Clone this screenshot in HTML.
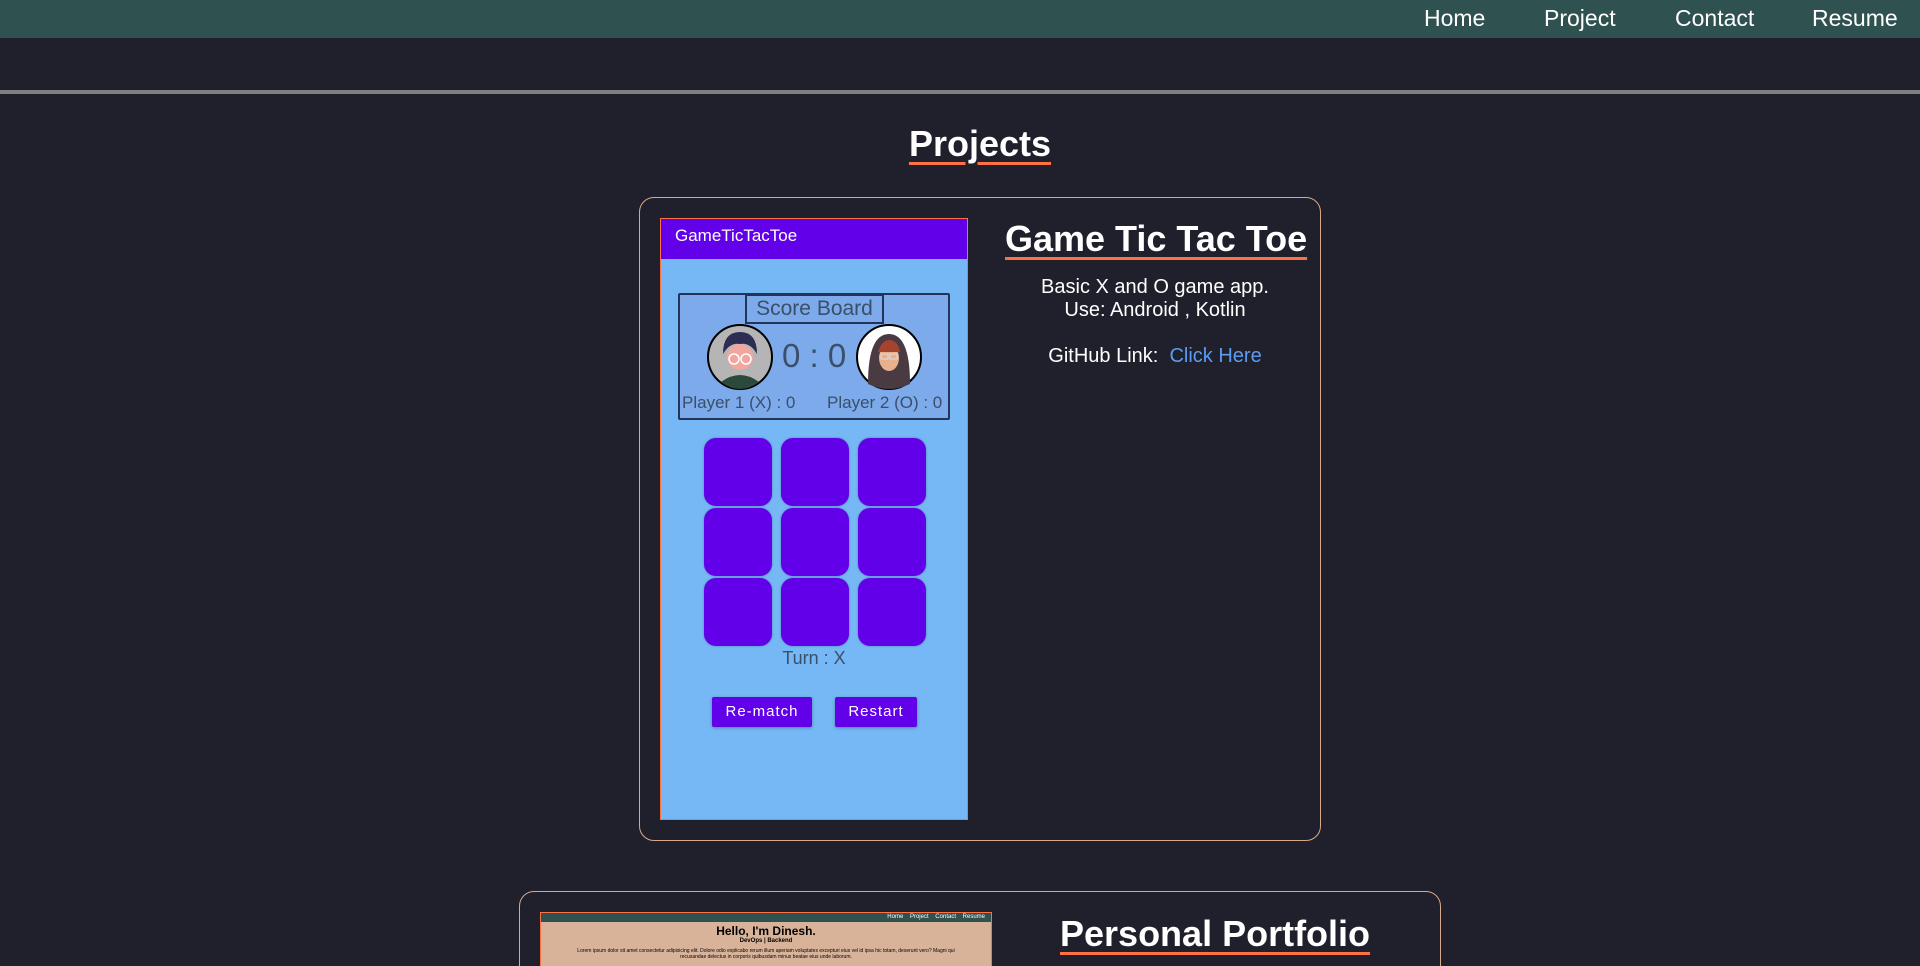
<!DOCTYPE html>
<html style="overflow:hidden;height:966px"><head><meta charset="utf-8"><style>
*{margin:0;padding:0;box-sizing:border-box}
body{width:1920px;height:966px;overflow:hidden;background:#1f202b;font-family:"Liberation Sans",sans-serif;position:relative;color:#fff}
.abs{position:absolute}
nav{position:absolute;left:0;top:0;width:1920px;height:38px;background:#2f5150}
nav span{position:absolute;top:5px;font-size:23px;color:#fff}
.hr{left:0;top:90px;width:1920px;height:4px;background:#7f7f7f}
.card{border:1px solid #d8aa8c;border-radius:15px}
.uline{text-decoration:underline;text-decoration-color:#ff7043;text-decoration-thickness:3px;text-underline-offset:6px}
.cell{position:absolute;width:68px;height:68px;background:#6200ea;border-radius:12px;box-shadow:0 0 2px rgba(0,0,0,.3)}
.btn{position:absolute;height:30px;background:#6200ea;border-radius:2px;color:#fff;font-size:15px;text-align:center;line-height:30px;letter-spacing:1px;box-shadow:0 1px 3px rgba(0,0,0,.3)}
.gray{color:#3a4f6a}
</style></head><body>
<nav><span style="left:1424px">Home</span><span style="left:1544px">Project</span><span style="left:1675px">Contact</span><span style="left:1812px">Resume</span></nav>
<div class="abs hr"></div>
<div class="abs uline" style="left:0;width:1960px;text-align:center;top:123px;font-size:36px;font-weight:bold">Projects</div>

<div class="abs card" style="left:639px;top:197px;width:682px;height:644px"></div>
<div class="abs" style="left:660px;top:218px;width:308px;height:602px;background:#75b8f5;border:1px solid #ff7043">
  <div class="abs" style="left:0;top:0;width:306px;height:40px;background:#6200ea;color:#fff;font-size:17px;padding:7px 0 0 14px">GameTicTacToe</div>
  <div class="abs" style="left:17px;top:74px;width:272px;height:127px;border:2px solid #22345a;background:#7caaea;border-radius:2px"></div>
  <div class="abs gray" style="left:84px;top:75px;width:139px;height:30px;border:2px solid #22345a;font-size:21px;text-align:center;line-height:26px">Score Board</div>
  <svg class="abs" style="left:44px;top:103px" width="70" height="70" viewBox="0 0 70 70"><circle cx="35" cy="35" r="32" fill="#b5b5b5" stroke="#000" stroke-width="2"/><path d="M16 60 Q35 46 54 60 Q45 67 35 67 Q25 67 16 60Z" fill="#2c4a3c"/><circle cx="35" cy="35" r="13" fill="#f2a6a0"/><path d="M18 32 Q18 10 35 10 Q52 10 52 32 Q45 20 35 22 Q25 20 18 32Z" fill="#2d2c52"/><circle cx="29" cy="37" r="5" fill="none" stroke="#fff" stroke-width="1.5"/><circle cx="41" cy="37" r="5" fill="none" stroke="#fff" stroke-width="1.5"/></svg>
  <div class="abs gray" style="left:121px;top:118px;font-size:33px">0 : 0</div>
  <svg class="abs" style="left:193px;top:103px" width="70" height="70" viewBox="0 0 70 70"><circle cx="35" cy="35" r="32" fill="#fff" stroke="#000" stroke-width="2"/><path d="M14 62 Q14 12 35 12 Q56 12 56 62 Q45 67 35 67 Q25 67 14 62Z" fill="#4a3a42"/><ellipse cx="35" cy="36" rx="10" ry="13" fill="#e9b08e"/><path d="M24 30 Q28 18 35 18 Q44 18 46 30Z" fill="#a4442e"/><rect x="27" y="32" width="7" height="5" fill="none" stroke="#ddd"/><rect x="36" y="32" width="7" height="5" fill="none" stroke="#ddd"/></svg>
  <div class="abs gray" style="left:21px;top:174px;font-size:17px">Player 1 (X) : 0</div>
  <div class="abs gray" style="left:166px;top:174px;font-size:17px">Player 2 (O) : 0</div>
  <div class="cell" style="left:43px;top:219px"></div><div class="cell" style="left:120px;top:219px"></div><div class="cell" style="left:197px;top:219px"></div>
  <div class="cell" style="left:43px;top:289px"></div><div class="cell" style="left:120px;top:289px"></div><div class="cell" style="left:197px;top:289px"></div>
  <div class="cell" style="left:43px;top:359px"></div><div class="cell" style="left:120px;top:359px"></div><div class="cell" style="left:197px;top:359px"></div>
  <div class="abs gray" style="left:0;width:306px;text-align:center;top:429px;font-size:18px">Turn : X</div>
  <div class="btn" style="left:51px;top:478px;width:100px">Re-match</div>
  <div class="btn" style="left:174px;top:478px;width:82px">Restart</div>
</div>
<div class="abs uline" style="left:1005px;top:218px;font-size:36px;font-weight:bold;white-space:nowrap">Game Tic Tac Toe</div>
<div class="abs" style="left:990px;width:330px;text-align:center;top:276px;font-size:20px;line-height:23px">Basic X and O game app.<br>Use: Android , Kotlin</div>
<div class="abs" style="left:990px;width:330px;text-align:center;top:345px;font-size:20px">GitHub Link:&nbsp; <span style="color:#5b9bf0">Click Here</span></div>

<div class="abs card" style="left:519px;top:891px;width:922px;height:120px"></div>
<div class="abs" style="left:540px;top:912px;width:452px;height:60px;background:#d8b39a;border:1px solid #ff7043">
  <div style="height:9px;background:#2f5150;font-size:6px;color:#fff;text-align:right;padding-right:6px;line-height:9px">Home &nbsp;&nbsp; Project &nbsp;&nbsp; Contact &nbsp;&nbsp; Resume</div>
  <div style="text-align:center;color:#000;font-size:12px;font-weight:bold;margin-top:2px">Hello, I'm Dinesh.</div>
  <div style="text-align:center;color:#000;font-size:6px;font-weight:bold">DevOps | Backend</div>
  <div style="text-align:center;color:#000;font-size:5px;margin:4px 30px 0">Lorem ipsum dolor sit amet consectetur adipisicing elit. Dolore odio explicabo rerum illum aperiam voluptates excepturi eius vel id ipsa hic totam, deserunt vero? Magni qui recusandae delectus in corporis quibusdam minus beatae eius unde laborum.</div>
</div>
<div class="abs uline" style="left:1060px;top:913px;font-size:36px;font-weight:bold;white-space:nowrap">Personal Portfolio</div>
</body></html>
